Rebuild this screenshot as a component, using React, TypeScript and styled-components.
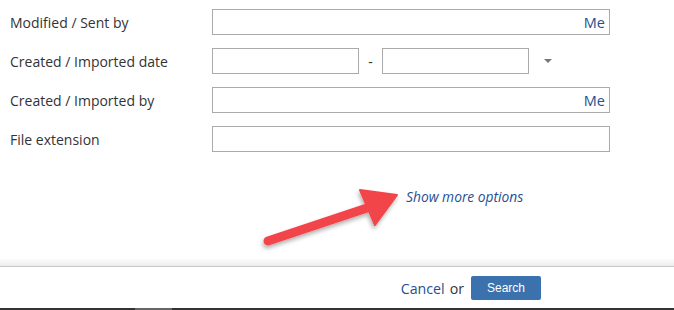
import React from 'react';
import styled, { createGlobalStyle } from 'styled-components';

const GlobalStyle = createGlobalStyle`
  html, body {
    margin: 0;
    padding: 0;
    background: #fff;
  }
  body {
    font-family: "Open Sans", "Noto Sans", sans-serif;
    color: #333;
  }
`;

const Page = styled.div`
  position: relative;
  width: 674px;
  height: 310px;
  display: flex;
  flex-direction: column;
  overflow: hidden;
`;

const Form = styled.div`
  display: flex;
  flex-direction: column;
  gap: 13px;
  padding: 9px 0 0 10px;
`;

const Row = styled.div`
  display: grid;
  grid-template-columns: 202px 1fr;
  align-items: center;
  height: 26px;
`;

const Label = styled.div`
  font-size: 14px;
  color: #333;
`;

const InputBox = styled.div<{ $width?: number }>`
  position: relative;
  box-sizing: border-box;
  width: ${p => p.$width ?? 398}px;
  height: 26px;
  border: 1px solid #aaa;
  background: #fff;
`;

const MeLink = styled.span`
  position: absolute;
  right: 4px;
  top: 50%;
  transform: translateY(-50%);
  font-size: 14.5px;
  color: #1e4f91;
`;

const DateRange = styled.div`
  display: flex;
  align-items: center;
`;

const Dash = styled.span`
  width: 23px;
  text-align: center;
  font-size: 14px;
  color: #333;
`;

const Caret = styled.span`
  margin-left: 15px;
  width: 0;
  height: 0;
  border-left: 4px solid transparent;
  border-right: 4px solid transparent;
  border-top: 4px solid #777;
`;

const MoreArea = styled.div`
  flex: 1;
  display: flex;
  align-items: flex-start;
  padding: 35px 0 0 406px;
`;

const MoreLink = styled.span`
  font-size: 13.8px;
  font-style: italic;
  color: #1e4f91;
`;

const Shade = styled.div`
  height: 8px;
  background: linear-gradient(to bottom, #fff, #ececec);
  border-bottom: 1px solid #c8c8c8;
`;

const Footer = styled.div`
  height: 41px;
  display: flex;
  align-items: center;
  justify-content: flex-end;
  padding-right: 133px;
  padding-top: 1px;
  box-sizing: border-box;
`;

const Cancel = styled.span`
  font-size: 14.2px;
  color: #1e4f91;
`;

const Or = styled.span`
  font-size: 14.2px;
  color: #333;
  margin: 0 7px 0 5px;
`;

const SearchButton = styled.button`
  width: 70px;
  height: 24px;
  border: none;
  border-radius: 2px;
  background: #3b72ae;
  color: #fff;
  font-family: "Liberation Sans", Arial, sans-serif;
  font-size: 12px;
  padding: 0;
`;

const BottomBar = styled.div`
  height: 2px;
  background: linear-gradient(to right, #333 135px, #666 135px, #666 172px, #333 172px);
`;

const Arrow = styled.svg`
  position: absolute;
  left: 0;
  top: 0;
  pointer-events: none;
`;

const App: React.FC = () => {
  return (
    <Page>
      <GlobalStyle />
      <Form>
        <Row>
          <Label>Modified / Sent by</Label>
          <InputBox>
            <MeLink>Me</MeLink>
          </InputBox>
        </Row>
        <Row>
          <Label>Created / Imported date</Label>
          <DateRange>
            <InputBox $width={147} />
            <Dash>-</Dash>
            <InputBox $width={147} />
            <Caret />
          </DateRange>
        </Row>
        <Row>
          <Label>Created / Imported by</Label>
          <InputBox>
            <MeLink>Me</MeLink>
          </InputBox>
        </Row>
        <Row>
          <Label>File extension</Label>
          <InputBox />
        </Row>
      </Form>
      <MoreArea>
        <MoreLink>Show more options</MoreLink>
      </MoreArea>
      <Shade />
      <Footer>
        <Cancel>Cancel</Cancel>
        <Or>or</Or>
        <SearchButton>Search</SearchButton>
      </Footer>
      <BottomBar />
      <Arrow width="674" height="310" viewBox="0 0 674 310">
        <defs>
          <filter id="sh" x="-20%" y="-20%" width="140%" height="160%">
            <feDropShadow dx="-1" dy="3" stdDeviation="2" floodColor="#000" floodOpacity="0.3" />
          </filter>
        </defs>
        <g filter="url(#sh)" fill="#f2454a" stroke="#f2454a">
          <line x1="268" y1="241" x2="370" y2="207" strokeWidth="9" strokeLinecap="round" />
          <polygon points="397,195 360,190 375,225" strokeWidth="2" strokeLinejoin="round" />
        </g>
      </Arrow>
    </Page>
  );
};

export default App;
